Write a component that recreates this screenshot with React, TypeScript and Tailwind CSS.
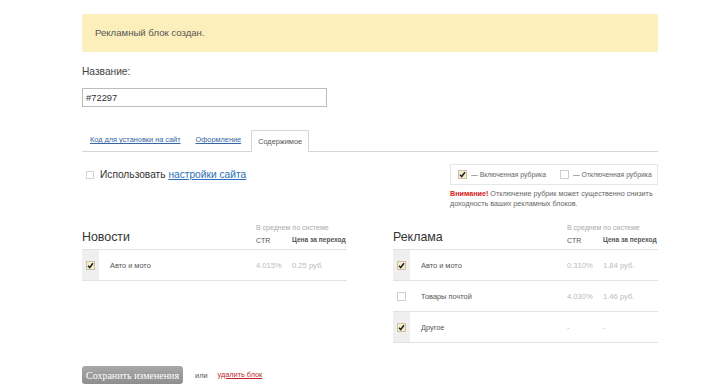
import React from 'react';

interface Row {
  name: string;
  ctr: string;
  price: string;
  on: boolean;
}

const NEWS: Row[] = [{ name: 'Авто и мото', ctr: '4.015%', price: '0.25 руб.', on: true }];

const ADS: Row[] = [
  { name: 'Авто и мото', ctr: '0.310%', price: '1.84 руб.', on: true },
  { name: 'Товары почтой', ctr: '4.030%', price: '1.46 руб.', on: false },
  { name: 'Другое', ctr: '-', price: '-', on: true },
];

function Check({ on }: { on: boolean }) {
  return (
    <span
      className={`inline-flex h-[9px] w-[9px] shrink-0 items-center justify-center border ${
        on ? 'border-[#c9c2a8] bg-[#f7eccb]' : 'border-[#cfcfcf] bg-white'
      }`}
    >
      {on && (
        <svg width="7" height="7" viewBox="0 0 7 7">
          <path d="M1 3.8 L2.7 5.5 L6 1.2" fill="none" stroke="#222" strokeWidth="1.5" />
        </svg>
      )}
    </span>
  );
}

function Rubrics({ title, rows }: { title: string; rows: Row[] }) {
  return (
    <div className="w-[265px]">
      <div className="flex h-[40px] items-end border-b border-[#e2e2e2] pb-[5px]">
        <div className="flex-1 pb-[1px] text-[12.4px] leading-none text-[#333]">{title}</div>
        <div className="w-[91px] shrink-0">
          <div className="mb-[6px] whitespace-nowrap text-[7px] leading-none text-[#aaa]">В среднем по системе</div>
          <div className="flex text-[7px] leading-none text-[#555]">
            <span className="w-[36px] shrink-0">CTR</span>
            <span className="whitespace-nowrap text-[6.6px] font-bold">Цена за переход</span>
          </div>
        </div>
      </div>
      {rows.map((r) => (
        <div key={r.name} className="flex h-[31px] items-stretch border-b border-[#e2e2e2]">
          <div className={`flex w-[17px] items-center justify-center ${r.on ? 'bg-[#efefef]' : 'bg-white'}`}>
            <Check on={r.on} />
          </div>
          <div className="flex flex-1 items-center pl-[11px] text-[7.4px] text-[#555]">{r.name}</div>
          <div className="flex w-[36px] shrink-0 items-center text-[7.6px] text-[#bbb]">{r.ctr}</div>
          <div className="flex w-[55px] shrink-0 items-center text-[7.6px] text-[#bbb]">{r.price}</div>
        </div>
      ))}
    </div>
  );
}

export default function App() {
  return (
    <div className="h-[389px] w-[725px] bg-white font-['Liberation_Sans',Arial,sans-serif]">
      <div className="ml-[82px] w-[576px] pt-[14px]">
        <div className="flex h-[38px] items-center rounded-[2px] bg-[#fdefbc] pl-[13px] text-[9.6px] text-[#555]">
          Рекламный блок создан.
        </div>

        <div className="mt-[15px] text-[10.2px] leading-none text-[#444]">Название:</div>
        <div className="mt-[11px] flex h-[19px] w-[245px] items-center border border-[#bdbdbd] pl-[3px] text-[9.4px] text-[#333]">
          #72297
        </div>

        <div className="mt-[23px] flex h-[22px] items-end border-b border-[#d6d6d6]">
          <a className="mb-[6px] ml-[8px] text-[7.35px] text-[#3465a4] underline">Код для установки на сайт</a>
          <a className="mb-[6px] ml-[15px] text-[7.35px] text-[#3465a4] underline">Оформление</a>
          <div className="-mb-px ml-[10px] flex h-[22px] items-center border border-b-0 border-[#d6d6d6] bg-white px-[6px] text-[7.35px] text-[#555]">
            Содержимое
          </div>
        </div>

        <div className="flex items-start justify-between">
          <div className="mt-[18px] flex items-center text-[10.2px] leading-none text-[#333]">
            <span className="ml-[4px] mr-[6px] inline-block h-[8px] w-[8px] border border-[#d4d4d4]" />
            Использовать&nbsp;
            <a className="text-[#2a6fb7] underline">настройки сайта</a>
          </div>
          <div className="mt-[12px] w-[208px]">
            <div className="flex h-[21px] items-center whitespace-nowrap border border-[#e6e6e6] pl-[7px] text-[6.8px] text-[#666]">
              <Check on />
              <span className="ml-[4px]">— Включенная рубрика</span>
              <span className="ml-[14px] flex">
                <Check on={false} />
              </span>
              <span className="ml-[4px]">— Отключенная рубрика</span>
            </div>
            <div className="mt-[4px] flex flex-col whitespace-nowrap text-[7.2px] leading-[10px] text-[#666]">
              <span>
                <b className="text-[#d42020]">Внимание!</b> Отключение рубрик может существенно снизить
              </span>
              <span>доходность ваших рекламных блоков.</span>
            </div>
          </div>
        </div>

        <div className="mt-[1px] flex justify-between">
          <Rubrics title="Новости" rows={NEWS} />
          <Rubrics title="Реклама" rows={ADS} />
        </div>

        <div className="mt-[23px] flex items-center">
          <button className="h-[18px] w-[101px] rounded-[3px] bg-gradient-to-b from-[#a8a8a8] to-[#8e8e8e] font-['Liberation_Serif',serif] text-[10px] text-white">
            Сохранить изменения
          </button>
          <span className="ml-[12px] text-[7.4px] text-[#555]">или</span>
          <a className="ml-[10px] text-[7.3px] text-[#c0282d] underline">удалить блок</a>
        </div>
      </div>
    </div>
  );
}
